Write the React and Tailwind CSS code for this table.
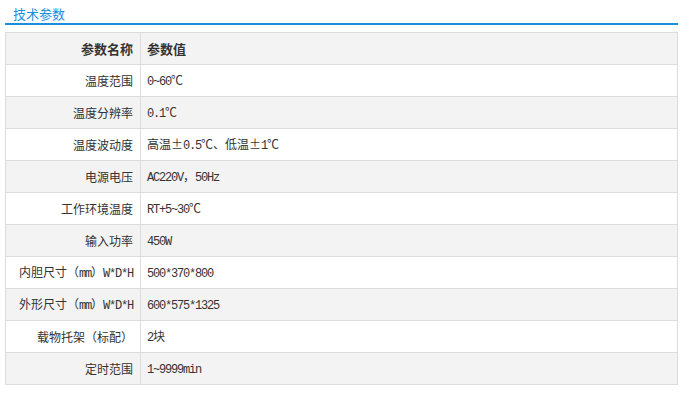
const rows = [
  ["温度范围", "0~60℃"],
  ["温度分辨率", "0.1℃"],
  ["温度波动度", "高温±0.5℃、低温±1℃"],
  ["电源电压", "AC220V，50Hz"],
  ["工作环境温度", "RT+5~30℃"],
  ["输入功率", "450W"],
  ["内胆尺寸（mm）W*D*H", "500*370*800"],
  ["外形尺寸（mm）W*D*H", "600*575*1325"],
  ["载物托架（标配）", "2块"],
  ["定时范围", "1~9999min"],
];

// ascii runs get a narrow mono look (half-width), CJK stays full-width
function Mixed({ text }) {
  const parts = text.match(/[\x20-\x7e]+|[^\x20-\x7e]+/g) || [];
  return parts.map((p, i) =>
    /^[\x20-\x7e]+$/.test(p) ? (
      <span key={i} className="font-['Liberation_Mono',monospace] tracking-[-1.2px]">
        {p}
      </span>
    ) : (
      <span key={i}>{p}</span>
    )
  );
}

export default function App() {
  return (
    <div className="w-[689px] h-[394px] bg-white pt-[7px] pl-[5px] pr-[11px]">
      {/* ===== Title ===== */}
      <div className="h-[18px] border-b-2 border-[#1a8fe0] pl-2 text-[13px] leading-[13px] text-[#1a8fe0] font-['Noto_Sans_CJK_SC',sans-serif]">
        技术参数
      </div>

      {/* ===== Table ===== */}
      <table className="mt-[7px] w-full table-fixed border-collapse border border-[#dcdcdc] text-[12px] text-[#333] font-['Noto_Sans_CJK_SC',sans-serif]">
        <colgroup>
          <col className="w-[135px]" />
          <col />
        </colgroup>
        <tbody>
          <tr className="h-[32px] bg-[#f3f3f3]">
            <th className="border border-[#dcdcdc] pr-[7px] text-right font-bold text-[13px]">参数名称</th>
            <th className="border border-[#dcdcdc] pl-[6px] text-left font-bold text-[13px]">参数值</th>
          </tr>
          {rows.map(([k, v], i) => (
            <tr key={k} className={`h-[32px] ${i % 2 === 1 ? "bg-[#f3f3f3]" : "bg-white"}`}>
              <td className="border border-[#dcdcdc] pr-[7px] text-right whitespace-nowrap">
                <Mixed text={k} />
              </td>
              <td className="border border-[#dcdcdc] pl-[6px] whitespace-nowrap">
                <Mixed text={v} />
              </td>
            </tr>
          ))}
        </tbody>
      </table>
    </div>
  );
}
